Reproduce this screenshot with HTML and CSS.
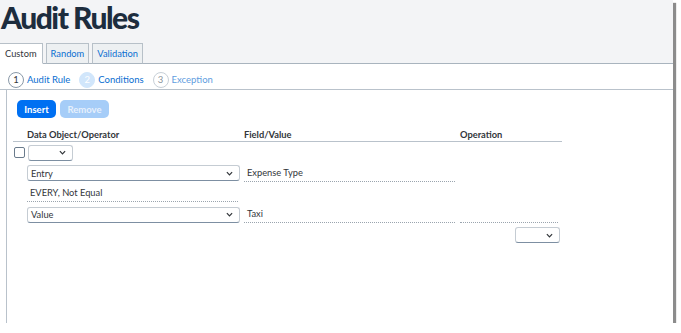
FILE: index.html
```html
<!DOCTYPE html>
<html>
<head>
    <title>Audit Rules</title>
    <link rel="stylesheet" href="styles.css">
</head>
<body>
    <div class="window">
        <div class="page-header">
            <h1>Audit Rules</h1>
            <div class="tabs">
                <div class="tab active">Custom</div>
                <div class="tab">Random</div>
                <div class="tab">Validation</div>
            </div>
        </div>

        <div class="steps">
            <div class="step done"><span class="step-num">1</span>Audit Rule</div>
            <div class="step current"><span class="step-num">2</span>Conditions</div>
            <div class="step todo"><span class="step-num">3</span>Exception</div>
        </div>

        <div class="panel">
            <div class="toolbar">
                <button class="btn btn-primary">Insert</button>
                <button class="btn btn-disabled">Remove</button>
            </div>

            <div class="rule-table">
                <div class="row head">
                    <div class="cell check"></div>
                    <div class="cell col-obj">Data Object/Operator</div>
                    <div class="cell col-field">Field/Value</div>
                    <div class="cell col-op">Operation</div>
                </div>

                <div class="row r1">
                    <div class="cell check"><span class="checkbox"></span></div>
                    <div class="cell col-obj">
                        <div class="select small"><span></span><svg class="chev" viewBox="0 0 8 5"><path d="M1 1l3 3 3-3"/></svg></div>
                    </div>
                </div>

                <div class="row r2">
                    <div class="cell check"></div>
                    <div class="cell col-obj">
                        <div class="select wide"><span>Entry</span><svg class="chev" viewBox="0 0 8 5"><path d="M1 1l3 3 3-3"/></svg></div>
                    </div>
                    <div class="cell col-field"><div class="text-field">Expense Type</div></div>
                </div>

                <div class="row r3">
                    <div class="cell check"></div>
                    <div class="cell col-obj"><div class="text-field">EVERY, Not Equal</div></div>
                </div>

                <div class="row r4">
                    <div class="cell check"></div>
                    <div class="cell col-obj">
                        <div class="select wide"><span>Value</span><svg class="chev" viewBox="0 0 8 5"><path d="M1 1l3 3 3-3"/></svg></div>
                    </div>
                    <div class="cell col-field"><div class="text-field">Taxi</div></div>
                    <div class="cell col-op"><div class="text-field"></div></div>
                </div>

                <div class="row r5">
                    <div class="cell check"></div>
                    <div class="cell col-obj"></div>
                    <div class="cell col-field"></div>
                    <div class="cell col-op op-select">
                        <div class="select small"><span></span><svg class="chev" viewBox="0 0 8 5"><path d="M1 1l3 3 3-3"/></svg></div>
                    </div>
                </div>
            </div>
        </div>
    </div>
</body>
</html>
```

FILE: styles.css
```css
* {
    margin: 0;
    padding: 0;
    box-sizing: border-box;
}

body {
    font-family: 'Lato', 'Liberation Sans', sans-serif;
    font-size: 9.3px;
    color: #32363a;
    background: white;
}

.window {
    width: 673px;
    height: 323px;
    background: white;
    display: flex;
    flex-direction: column;
    box-shadow: 3px 3px 1px rgba(0, 0, 0, 0.45);
}

/* Header with title and tabs */
.page-header {
    background: #f3f4f6;
    height: 64px;
    border-bottom: 1px solid #a9b4be;
    display: flex;
    flex-direction: column;
    justify-content: space-between;
}

h1 {
    font-size: 30px;
    font-weight: 900;
    color: #1d2d3e;
    line-height: 34px;
    letter-spacing: -1.5px;
    padding-left: 1px;
}

.tabs {
    display: flex;
    gap: 3px;
    margin-bottom: -1px;
}

.tab {
    height: 21px;
    padding: 0 4px;
    border: 1px solid #b7c0c8;
    border-bottom: 1px solid #a9b4be;
    background: #edf0f2;
    color: #0a6ed1;
    line-height: 20px;
}

.tab.active {
    padding: 0 5px;
    background: white;
    color: #32363a;
    border-left: none;
    border-bottom-color: white;
}

/* Wizard steps */
.steps {
    height: 26px;
    display: flex;
    align-items: center;
    gap: 9px;
    padding: 6px 0 0 8px;
    border-bottom: 1px solid #b9c2cb;
    font-size: 9.5px;
}

.step {
    display: flex;
    align-items: center;
    gap: 3px;
    color: #0a6ed1;
}

.step-num {
    width: 16px;
    height: 16px;
    border-radius: 50%;
    border: 1px solid #8a99a8;
    display: flex;
    align-items: center;
    justify-content: center;
    font-size: 9.5px;
    color: #32363a;
}

.step.current .step-num {
    background: #d1e6fb;
    border-color: #d1e6fb;
    color: white;
}

.step.todo {
    color: #5f9de0;
}

.step.todo .step-num {
    border-color: #c8d0d8;
    color: #8b949d;
}

/* Panel */
.panel {
    flex: 1;
    margin-left: 6px;
    border-left: 1px solid #b9c2cb;
    padding: 10px 0 0 10px;
}

.toolbar {
    display: flex;
    gap: 4px;
}

.btn {
    height: 18px;
    border: none;
    border-radius: 5px;
    font-family: inherit;
    font-size: 9.5px;
    font-weight: 700;
    color: white;
}

.btn-primary {
    background: #0070f2;
    width: 39px;
}

.btn-disabled {
    background: #a6cdf8;
    color: #e6f0fc;
    width: 49px;
}

.rule-table {
    margin-left: -4px;
    margin-top: 6px;
    width: 549px;
}

.row {
    display: flex;
    align-items: center;
    height: 21px;
}

.row.head {
    height: 18px;
    font-weight: 700;
    border-bottom: 1px solid #b9c2cb;
    align-items: flex-end;
    padding-bottom: 1px;
}

.row.r2,
.row.r5 {
    height: 20px;
}

.cell.check {
    width: 14px;
    flex-shrink: 0;
}

.cell.col-obj {
    width: 217px;
    flex-shrink: 0;
}

.cell.col-field {
    width: 216px;
    flex-shrink: 0;
}

.cell.col-op {
    width: 102px;
    flex-shrink: 0;
}

.checkbox {
    display: block;
    width: 11px;
    height: 11px;
    margin-left: 1px;
    border: 1px solid #6a7b8c;
    border-radius: 2px;
}

.select {
    height: 16px;
    border: 1px solid #c5ccd3;
    border-bottom-color: #7d8fa2;
    border-radius: 3px;
    display: flex;
    align-items: center;
    justify-content: space-between;
    padding: 0 6px 0 3px;
    background: white;
}

.select.small {
    width: 45px;
    margin-left: 1px;
}

.select.wide {
    width: 213px;
}

.chev {
    width: 7px;
    height: 5px;
    fill: none;
    stroke: #32363a;
    stroke-width: 1.4;
}

.text-field {
    height: 17px;
    border-bottom: 1px dotted #9aa4ae;
    padding-left: 3px;
    line-height: 16px;
    width: 211px;
}

.col-op .text-field {
    width: 98px;
}

.op-select {
    display: flex;
    justify-content: flex-end;
    padding-right: 2px;
}
```
